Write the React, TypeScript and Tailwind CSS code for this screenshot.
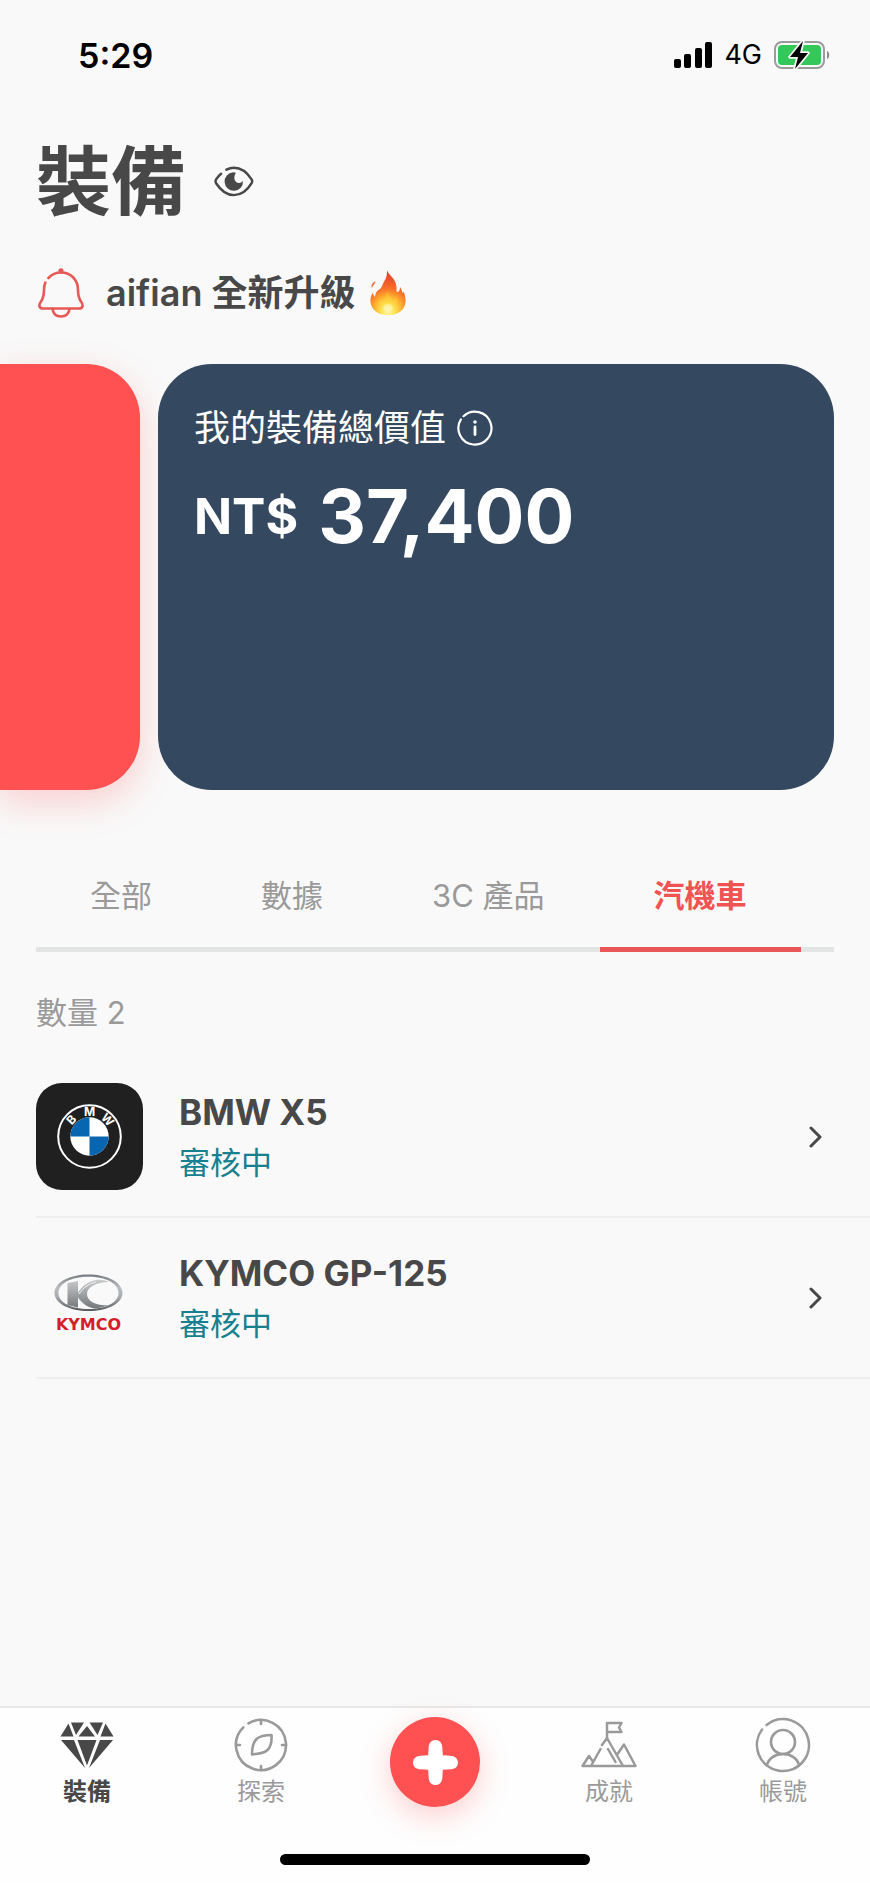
import type { ReactNode } from "react";

const muted = "text-[#9a9a9a]";

function SignalIcon() {
  return (
    <svg width="38" height="26" viewBox="0 0 38 26" aria-hidden="true">
      <rect x="0" y="17" width="7" height="9" rx="2" />
      <rect x="10" y="12" width="7" height="14" rx="2" />
      <rect x="21" y="6" width="7" height="20" rx="2" />
      <rect x="31" y="0" width="7" height="26" rx="2" />
    </svg>
  );
}

function BatteryIcon() {
  return (
    <svg width="56" height="30" viewBox="0 0 56 30" aria-hidden="true">
      <rect x="1" y="2" width="49" height="26" rx="7" fill="none" stroke="#9b9b9b" strokeWidth="2" />
      <rect x="4" y="5" width="43" height="20" rx="4" fill="#34c759" />
      <path d="M53 11c3 1 3 7 0 8z" fill="#8b8b8b" />
      <path d="M29 1 16 17h8l-3 12 13-16h-8z" fill="#000" stroke="#f9f9f9" strokeWidth="3.5" paintOrder="stroke" strokeLinejoin="round" />
    </svg>
  );
}

function EyeIcon() {
  return (
    <svg width="40" height="31" viewBox="0 0 42 32" fill="none" stroke="#484848" strokeWidth="2.6" strokeLinecap="round" aria-hidden="true">
      <path d="M13 3.6C16 2 18.400 1.500 21 1.500c8 0 14.500 6 18.500 12.300q1.200 2 0 4C35.500 24.500 29 30.300 21 30.300S6.500 24.500 2.200 17.800q-1.200-2 0-4C3.600 11.600 5.200 9.600 7.400 7.800" />
      <path d="M20 6.300A9.700 9.700 0 1 0 30.500 15.500C28.500 18 25 18.300 23 16.200 20.800 14 21 10 23 6.800Z" fill="#484848" stroke="none" />
    </svg>
  );
}

function BellIcon() {
  return (
    <svg width="46" height="50" viewBox="0 0 46 50" fill="none" stroke="#e55a57" strokeWidth="2.600" strokeLinecap="round" strokeLinejoin="round" aria-hidden="true">
      <path d="M10.500 10C14 6.200 18 4.500 23 4.500c10 0 17 7.500 17 17.500 0 6 1 8.500 3 11.500 3 4 1.500 7-2 7H5c-3.500 0-5-3-2-7 2-3 3-5.500 3-11.500 0-3 .3-5.200 1.400-7.400" />
      <path d="M14.500 41c.8 4.800 4 7.500 8.500 7.500s7.700-2.700 8.500-7.500" />
      <circle cx="23" cy="2.800" r="1.300" fill="#e55a57" />
    </svg>
  );
}

function FlameIcon() {
  return (
    <svg width="36" height="46" viewBox="0 0 36 46" aria-hidden="true">
      <defs>
        <radialGradient id="flame" gradientUnits="userSpaceOnUse" cx="18" cy="40" r="36">
          <stop offset="0" stopColor="#fffdc8" />
          <stop offset=".18" stopColor="#ffe758" />
          <stop offset=".38" stopColor="#ffb12d" />
          <stop offset=".6" stopColor="#f8702a" />
          <stop offset="1" stopColor="#e2442a" />
        </radialGradient>
      </defs>
      <path d="M17 0c1 5 9 8 9.500 17 .1 2-.2 4 .5 5 2 0 3-2 3-5 1.500 2 2 4 2.500 6 .5-.3 1-1 1.300-1.600 1 4 2.200 7 1.700 11-.9 8-8 12.600-17.500 12.600S1.500 40.500.5 32c-.5-4 1-7 2.500-9.500 0 2 1 3.500 2 4.500.2-2 .6-3.500 1.500-5C8 19.500 10.500 20 12 16c2-5 5.500-8 5-16Z" fill="url(#flame)" />
      <path d="M5.500 11c-.2 3-2.500 4-3.500 7-1.500-3 .5-5 3.500-7Z" fill="#f06a3c" />
      <path d="M17 20c1 6 5 6 6 11 2-1 3-2 4-4 2 7-1 15-9 15-7 0-11-7-8-13 1 2 2 3 3 3 1-4 4-6 4-12Z" fill="#ffd23d" opacity=".4" />
      <ellipse cx="18" cy="38" rx="5" ry="4" fill="#ffffd8" opacity=".5" />
    </svg>
  );
}

function InfoIcon() {
  return (
    <svg width="36" height="36" viewBox="0 0 36 36" fill="none" stroke="#fff" strokeWidth="2.200" strokeLinecap="round" aria-hidden="true">
      <path d="M6.500 6.200A16.500 16.500 0 1 1 3.900 9.400" />
      <path d="M18 17v7.500" strokeWidth="2.800" />
      <circle cx="18" cy="12" r="1.800" fill="#fff" stroke="none" />
    </svg>
  );
}

function ChevronIcon() {
  return (
    <svg width="13" height="22" viewBox="0 0 13 22" fill="none" stroke="#484848" strokeWidth="3" strokeLinecap="round" strokeLinejoin="round" aria-hidden="true">
      <path d="m2 2 9 9-9 9" />
    </svg>
  );
}

function BmwLogo() {
  return (
    <svg className="size-[107px]" viewBox="0 0 107 107" role="img" aria-label="BMW">
      <rect width="107" height="107" rx="26" fill="#202020" />
      <circle cx="53.500" cy="53.500" r="31.300" fill="none" stroke="#fff" strokeWidth="2" />
      <circle cx="53.500" cy="53.500" r="19.200" fill="#fff" />
      <path d="M53.500 53.500V34.300a19.200 19.200 0 0 0-19.200 19.200ZM53.500 53.500v19.200a19.200 19.200 0 0 0 19.200-19.200Z" fill="#0866b1" />
      <g fill="#fff" fontFamily="Inter, sans-serif" fontSize="12" fontWeight="700" textAnchor="middle">
        <text x="53.500" y="33">M</text>
        <text x="53.500" y="33" transform="rotate(-47 53.500 53.500)">B</text>
        <text x="53.500" y="33" transform="rotate(47 53.500 53.500)">W</text>
      </g>
    </svg>
  );
}

function KymcoLogo() {
  return (
    <svg className="size-[107px]" viewBox="0 0 107 107" role="img" aria-label="KYMCO">
      <defs>
        <linearGradient id="steel" x1="0" y1="0" x2="0" y2="1">
          <stop offset="0" stopColor="#777b7e" />
          <stop offset=".35" stopColor="#b9bcbe" />
          <stop offset=".6" stopColor="#aaaeb1" />
          <stop offset="1" stopColor="#55585b" />
        </linearGradient>
        <linearGradient id="letter" x1="0" y1="0" x2="0" y2="1">
          <stop offset="0" stopColor="#c9cbcd" />
          <stop offset="1" stopColor="#74787b" />
        </linearGradient>
      </defs>
      <path fillRule="evenodd" fill="url(#steel)" d="M52.500 30.500c19 0 34 8 34 18.500s-15 18-34 18-34-7.500-34-18 15-18.500 34-18.500Zm0 2.200C35 32.700 22.500 39.500 22.500 49S35 65 52.500 65s30-6.500 30-16-12.500-16.300-30-16.300Z" />
      <path fill="url(#letter)" d="M31.500 39 42 37v12C46 42 52 37.500 60 36c4-.5 9 0 13 2-13 0-22 5-22 12 0 7 9 12 21 11-4 2-8 3-13 3.500-7-1-13-5-17-11v10L31.500 61Z" />
      <path fill="none" stroke="#f4f4f4" strokeWidth="1" d="M43 50c4-6 9-10 17-12" />
      <text x="52.500" y="86" textAnchor="middle" fill="#d21f2b" fontFamily="DejaVu Sans, sans-serif" fontSize="16" fontWeight="700">
        KYMCO
      </text>
    </svg>
  );
}

function DiamondIcon() {
  return (
    <svg width="54" height="47" viewBox="0 0 54 47" fill="#484848" aria-hidden="true">
      <path d="M8.500 1.500 13.500 14.500H.5ZM11 .5h13L16 13ZM29.500.5H43L37.500 13ZM45.500 1.500 53.500 14.500H40.500ZM27 4l8 10.500H18.500ZM1 18h13l11 28ZM17.500 18h19L27 43.500ZM40 18h13L29 46Z" />
    </svg>
  );
}

function CompassIcon() {
  return (
    <svg width="54" height="54" viewBox="0 0 54 54" fill="none" stroke="currentColor" strokeWidth="2.600" strokeLinecap="round" strokeLinejoin="round" aria-hidden="true">
      <path d="M14.500 5.350A25 25 0 1 1 9.320 9.320" />
      <path d="M27 2v4M27 48v4M2 27h4M48 27h4" />
      <path d="M37.500 17c.5 7-1 12-4 15-3.500 3.500-9 3.500-15.500 4.500 0-7 1-12 4.500-15.500 4-3.500 9-4 15-4Z" />
    </svg>
  );
}

function MountainIcon() {
  return (
    <svg width="56" height="54" viewBox="0 0 56 54" fill="none" stroke="currentColor" strokeWidth="2.500" strokeLinecap="round" strokeLinejoin="round" aria-hidden="true">
      <path d="M26 20V5h14.500l-2.500 4.500L40.500 14H26" />
      <path d="M21 27l5-7 16 28H1.500L8 38l3.500 5M19.500 31 10 48M27 31l7.500 13M36.500 36 43 26.500 54.500 48H42" />
    </svg>
  );
}

function AccountIcon() {
  return (
    <svg width="56" height="56" viewBox="0 0 56 56" fill="none" stroke="currentColor" strokeWidth="2.600" strokeLinecap="round" aria-hidden="true">
      <path d="M11.500 7.900A26 26 0 1 1 7.100 12.500" />
      <circle cx="28" cy="25" r="12" />
      <path d="M12 48c1.500-6.500 8-11 16-11s14.500 4.500 16 11" />
    </svg>
  );
}

function PlusIcon() {
  return (
    <svg width="45" height="45" viewBox="0 0 46 46" fill="#fff" aria-hidden="true">
      <path d="M16 8c0-5 3-8 7-8s7 3 7 8l.5 7.500L38 16c5 0 8 3 8 7s-3 7-8 7l-7.500.5L30 38c0 5-3 8-7 8s-7-3-7-8l-.5-7.500L8 30c-5 0-8-3-8-7s3-7 8-7l7.500-.5Z" />
    </svg>
  );
}

const tabs = ["全部", "數據", "3C 產品", "汽機車"];

const vehicles: { name: string; logo: ReactNode }[] = [
  { name: "BMW X5", logo: <BmwLogo /> },
  { name: "KYMCO GP-125", logo: <KymcoLogo /> },
];

function NavItem({ label, icon, active = false }: { label: string; icon: ReactNode; active?: boolean }) {
  return (
    <a href="#" className={`flex flex-col items-center gap-1 ${active ? "font-bold text-[#484848]" : muted}`}>
      <span className="flex h-14 items-center justify-center">{icon}</span>
      <span className="text-[24px] leading-[30px]">{label}</span>
    </a>
  );
}

export default function App() {
  return (
    <div lang="zh-Hant" className="flex min-h-screen flex-col overflow-x-hidden bg-[#f9f9f9] font-['Inter','Noto_Sans_CJK_TC',sans-serif] text-[#484848]">
      <div className="flex h-[110px] items-center justify-between pr-10 pl-[78px] text-black">
        <span className="text-[34px] font-semibold">5:29</span>
        <div className="flex items-center gap-3">
          <SignalIcon />
          <span className="text-[27px]">4G</span>
          <BatteryIcon />
        </div>
      </div>

      <header className="px-9">
        <div className="flex h-[143px] items-center gap-7">
          <h1 className="text-[75px] leading-[100px] font-bold">裝備</h1>
          <button type="button" aria-label="顯示價值">
            <EyeIcon />
          </button>
        </div>
        <a href="#" className="flex h-20 items-center gap-[22px] pl-[2px]">
          <BellIcon />
          <span className="flex items-center gap-[14px] text-[36px] font-semibold">
            <span>aifian 全新升級</span>
            <FlameIcon />
          </span>
        </a>
      </header>

      <section className="mt-[31px] flex gap-[18px] pr-9">
        <div className="h-[426px] w-[140px] shrink-0 rounded-r-[54px] bg-[#ff5151] shadow-[0_12px_36px_rgba(255,81,81,0.25)]" />
        <div className="flex h-[426px] flex-1 flex-col rounded-[54px] bg-[#34485f] px-9 pt-[37px] text-white">
          <div className="flex h-[54px] items-center gap-[11px]">
            <span className="text-[36px]">我的裝備總價值</span>
            <button type="button" aria-label="說明">
              <InfoIcon />
            </button>
          </div>
          <div className="flex h-[122px] items-center gap-5 font-bold">
            <span className="text-[50px]">NT$</span>
            <span className="text-[74px]">37,400</span>
          </div>
        </div>
      </section>

      <nav className="mx-9 mt-[60px] flex gap-px border-b-[5px] border-[#e2e5e3]">
        {tabs.map((tab) => (
          <button
            key={tab}
            type="button"
            className={`-mb-[5px] h-[102px] shrink-0 border-b-[5px] px-[54px] pb-1 text-[31px] ${
              tab === "汽機車" ? "border-[#e95857] font-bold text-[#f05352]" : `border-transparent ${muted}`
            }`}
          >
            {tab}
          </button>
        ))}
      </nav>

      <main className="flex-1 pl-9">
        <p className={`mt-[37px] text-[31px] leading-[48px] ${muted}`}>數量 2</p>
        <ul className="mt-5">
          {vehicles.map((vehicle) => (
            <li key={vehicle.name} className="border-b-2 border-[#efefef]">
              <a href="#" className="flex h-[159px] items-center gap-9 pr-12">
                {vehicle.logo}
                <span className="flex flex-1 flex-col gap-1">
                  <span className="text-[35px] leading-[48px] font-bold">{vehicle.name}</span>
                  <span className="text-[31px] leading-[46px] text-[#16808f]">審核中</span>
                </span>
                <ChevronIcon />
              </a>
            </li>
          ))}
        </ul>
      </main>

      <footer className="border-t-2 border-[#e8e8e8] bg-[#fefefe] pt-[9px]">
        <nav className="grid h-[137px] grid-cols-5">
          <NavItem label="裝備" icon={<DiamondIcon />} active />
          <NavItem label="探索" icon={<CompassIcon />} />
          <div className="flex justify-center">
            <button
              type="button"
              aria-label="新增"
              className="flex size-[90px] items-center justify-center rounded-full bg-[#ff5151] shadow-[0_9px_30px_rgba(255,81,81,0.28)]"
            >
              <PlusIcon />
            </button>
          </div>
          <NavItem label="成就" icon={<MountainIcon />} />
          <NavItem label="帳號" icon={<AccountIcon />} />
        </nav>
        <div className="mx-auto mb-[18px] h-[11px] w-[310px] rounded-full bg-black" />
      </footer>
    </div>
  );
}
